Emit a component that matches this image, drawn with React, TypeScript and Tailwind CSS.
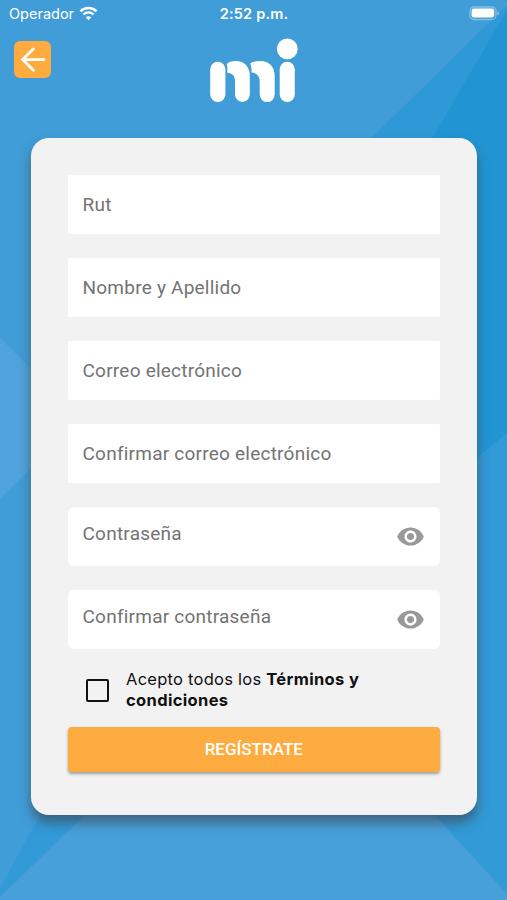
import { useState } from "react";
import { MdVisibility } from "react-icons/md";

const Background = () => (
  <svg className="absolute inset-0" width="507" height="900" viewBox="0 0 507 900" aria-hidden="true">
    <rect width="507" height="900" fill="#409dd8" />
    <path d="M507 5L240 267V900H507Z" fill="#2e99d6" />
    <path d="M507 10L380 228V540L507 433Z" fill="#2195d3" />
    <path d="M507 433L380 540V900H507Z" fill="#329ad7" />
    <path d="M0 338L81 418L0 499Z" fill="#50a3dc" />
    <path d="M0 888L44 808H92L0 898Z" fill="#319ad7" />
    <path d="M0 897L92 808H428L507 894V900H0Z" fill="#47a0d9" />
  </svg>
);

const StatusBar = () => (
  <div className="flex h-7 items-center justify-between pl-[9px] pr-[8px] font-['Inter',sans-serif] text-white">
    <div className="flex w-40 items-center gap-[5px]">
      <span className="text-[14.5px] leading-[28px]">Operador</span>
      <svg className="mb-[2px]" width="19" height="15" viewBox="0 0 20 15" fill="none" stroke="white" aria-hidden="true">
        <path d="M1.5 5.3C6.3 .6 13.7 .6 18.5 5.3" strokeWidth="2.5" />
        <path d="M4.7 8.6C7.7 5.7 12.3 5.7 15.3 8.6" strokeWidth="2.4" />
        <path d="M10 14.5L7.1 11.5C8.7 9.9 11.3 9.9 12.9 11.5Z" fill="white" stroke="none" />
      </svg>
    </div>
    <span className="text-[14.5px] font-semibold tracking-[0.2px]">2:52 p.m.</span>
    <div className="flex w-40 justify-end">
      <svg className="-mr-[1px] mb-[1px]" width="31" height="15" viewBox="0 0 31 15" aria-hidden="true">
        <rect x="1" y="1" width="26" height="12.5" rx="4" fill="none" stroke="white" strokeOpacity=".35" strokeWidth="1.3" />
        <rect x="2.6" y="2.6" width="22.6" height="9" rx="2.3" fill="white" />
        <path d="M28.5 5.2Q31.5 7.2 28.5 9.4Z" fill="white" fillOpacity=".45" />
      </svg>
    </div>
  </div>
);

const Logo = () => (
  <svg width="88" height="65" viewBox="210 38 88 65" fill="white" aria-label="mi">
    <rect x="210.2" y="61.8" width="15.2" height="40.2" rx="7.6" />
    <path d="M226.7 64.2Q229.5 61 235.7 61C244.5 61 249.8 67 249.8 75.5V94.6A7.4 7.4 0 0 1 235 94.6V81.5C235 76 232.5 73 227.2 72.8Q228 67.5 226.7 64.2Z" />
    <path d="M250.2 63.6Q253.5 61 260 61C269.2 61 274.7 67 274.7 75.5V94.6A7.4 7.4 0 0 1 259.7 94.6V81.5C259.7 76 256.8 72.8 251.3 72.6Q252.2 68.5 250.2 63.6Z" />
    <circle cx="287.3" cy="48.9" r="10.4" />
    <rect x="279.7" y="61.8" width="15.1" height="40.2" rx="7.5" />
  </svg>
);

const Field = ({ label }: { label: string }) => (
  <input
    type="text"
    placeholder={label}
    aria-label={label}
    className="block h-[59px] w-full rounded-[2px] bg-white px-[15px] text-[19px] tracking-[0.23px] text-[#333] placeholder:text-[#737373] outline-none"
  />
);

const PasswordField = ({ label }: { label: string }) => {
  const [isVisible, setIsVisible] = useState(false);
  return (
    <div className="flex h-[59px] items-center rounded-[6px] bg-white pl-[15px] pr-[15px]">
      <input
        type={isVisible ? "text" : "password"}
        placeholder={label}
        aria-label={label}
        className="mb-[5px] min-w-0 flex-1 text-[19px] tracking-[0.23px] text-[#333] placeholder:text-[#737373] outline-none"
      />
      <button type="button" aria-label="Mostrar contraseña" onClick={() => setIsVisible(!isVisible)}>
        <MdVisibility className="size-[29px] text-[#999]" />
      </button>
    </div>
  );
};

export default function App() {
  const [isAccepted, setIsAccepted] = useState(false);
  return (
    <div className="relative h-[900px] w-[507px] overflow-hidden font-['Roboto',sans-serif]">
      <Background />
      <div className="relative">
        <StatusBar />
        <header className="grid h-[110px] grid-cols-3 items-start pt-[10px]">
          <button type="button" aria-label="Volver" className="ml-[14px] mt-[3px] flex size-[37px] items-center justify-center rounded-[6px] bg-[#feab40]">
            <svg width="27" height="27" viewBox="0 0 27 27" fill="none" stroke="white" strokeWidth="2.8" strokeLinecap="round" aria-hidden="true">
              <path d="M14.3 2.9L3.6 13.6L14.3 24.3M3.6 13.6H24.9" />
            </svg>
          </button>
          <div className="flex justify-center">
            <Logo />
          </div>
        </header>

        <main className="ml-[31px] h-[677px] w-[445.5px] rounded-[18px] bg-[#f2f2f2] px-[36.5px] pt-[37px] shadow-[0_8px_12px_rgba(60,70,85,0.65)]">
          <form className="flex flex-col" onSubmit={(e) => e.preventDefault()}>
            <div className="flex flex-col gap-[24.1px]">
              <Field label="Rut" />
              <Field label="Nombre y Apellido" />
              <Field label="Correo electrónico" />
              <Field label="Confirmar correo electrónico" />
              <PasswordField label="Contraseña" />
              <PasswordField label="Confirmar contraseña" />
            </div>

            <label className="mt-[20px] flex h-[42px] items-center pl-[18px] font-['Inter',sans-serif] text-[16.5px] leading-[21px] tracking-[0.25px] text-[#111]">
              <input type="checkbox" className="peer sr-only" checked={isAccepted} onChange={() => setIsAccepted(!isAccepted)} />
              <span className="size-[23px] shrink-0 rounded-[2px] border-[2.5px] border-[#111] peer-checked:bg-[#111]"></span>
              <span className="ml-[17.5px] flex flex-col">
                <span>Acepto todos los <b className="font-bold tracking-[0.35px]">Términos y</b></span>
                <b className="font-bold tracking-[0.35px]">condiciones</b>
              </span>
            </label>

            <button type="submit" className="mt-[16px] h-[45px] rounded-[4px] bg-[#feab40] text-[17px] font-medium text-white shadow-[0_2px_3px_rgba(0,0,0,0.35)]">
              REGÍSTRATE
            </button>
          </form>
        </main>
      </div>
    </div>
  );
}
